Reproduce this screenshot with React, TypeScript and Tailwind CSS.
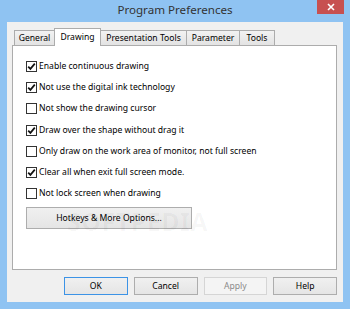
import React from "react";

const tabs = [
  { label: "General", w: "w-[41px]", sel: false },
  { label: "Drawing", w: "w-[47px]", sel: true },
  { label: "Presentation Tools", w: "w-[87px]", sel: false },
  { label: "Parameter", w: "w-[54px]", sel: false },
  { label: "Tools", w: "w-[36px]", sel: false },
];

const rows = [
  { label: "Enable continuous drawing", checked: true, mt: "mt-[15px]" },
  { label: "Not use the digital ink technology", checked: true, mt: "mt-[10px]" },
  { label: "Not show the drawing cursor", checked: false, mt: "mt-[10px]" },
  { label: "Draw over the shape without drag it", checked: true, mt: "mt-[11px]" },
  { label: "Only draw on the work area of monitor, not full screen", checked: false, mt: "mt-[10px]" },
  { label: "Clear all when exit full screen mode.", checked: true, mt: "mt-[10px]" },
  { label: "Not lock screen when drawing", checked: false, mt: "mt-[10px]" },
];

function CheckBox({ checked }: { checked: boolean }) {
  return (
    <div className="w-[11px] h-[11px] border border-[#333333] bg-white flex items-center justify-center shrink-0">
      {checked && (
        <svg width="9" height="9" viewBox="0 0 9 9">
          <path d="M1.2 4.6 L3.4 6.9 L7.8 1.6" fill="none" stroke="#111" strokeWidth="1.7" />
        </svg>
      )}
    </div>
  );
}

export default function App() {
  return (
    <div className="w-[350px] h-[309px] bg-[#8fc3f2] flex flex-col font-['Noto_Sans',sans-serif] text-black overflow-hidden">
      <div className="h-[22px] relative flex justify-center">
        <span className="text-[11.6px] leading-[20px] text-[#333333]">Program Preferences</span>
        <div className="absolute right-[6px] top-0 w-[27px] h-[14px] bg-[#c75050] flex items-center justify-center">
          <svg width="8" height="8" viewBox="0 0 8 8">
            <path d="M1 1 L7 7 M7 1 L1 7" stroke="#ffffff" strokeWidth="1.6" />
          </svg>
        </div>
      </div>
      <div className="mx-[7px] h-[280px] bg-[#f0f0f0] pt-[6px] pl-[5px] pr-[6px] flex flex-col">
        <div className="flex items-end h-[17px] pl-[2px]">
          {tabs.map((t, i) =>
            t.sel ? (
              <div
                key={t.label}
                className={`${t.w} h-[18px] -mb-px relative z-10 bg-white border border-b-0 border-[#acacac] -ml-px flex justify-center text-[8.6px] leading-[14px] pt-[1px]`}
              >
                {t.label}
              </div>
            ) : (
              <div
                key={t.label}
                className={`${t.w} h-[15px] bg-gradient-to-b from-[#f2f2f2] to-[#e3e3e3] border border-b-0 border-[#acacac] ${i === 0 ? "" : "-ml-px"} flex justify-center text-[8.6px] leading-[14px]`}
              >
                {t.label}
              </div>
            )
          )}
        </div>
        <div className="h-[225px] border border-[#acacac] bg-white relative flex flex-col pl-[13px]">
          {rows.map((r) => (
            <div key={r.label} className={`${r.mt} h-[11px] flex items-center`}>
              <CheckBox checked={r.checked} />
              <span className="ml-[2px] text-[8.6px] leading-[11px] whitespace-nowrap">{r.label}</span>
            </div>
          ))}
          <div className="mt-[8px] w-[166px] h-[22px] border border-[#adadad] bg-gradient-to-b from-[#f0f0f0] to-[#e5e5e5] flex items-center justify-center text-[8.6px]">
            Hotkeys &amp; More Options...
          </div>
          <div aria-hidden="true" className="absolute left-[54px] top-[163px] text-[25px] font-bold tracking-[0.5px] text-[rgba(0,0,0,0.035)] leading-none pointer-events-none select-none whitespace-nowrap">
            SOFTPEDIA
          </div>
        </div>
        <div className="mt-[7px] flex pl-[52px] gap-[6px]">
          <div className="w-[64px] h-[18px] border border-[#3c93e6] bg-gradient-to-b from-[#f0f0f0] to-[#e5e5e5] flex items-center justify-center text-[8.6px]">
            OK
          </div>
          <div className="w-[64px] h-[18px] border border-[#adadad] bg-gradient-to-b from-[#f0f0f0] to-[#e5e5e5] flex items-center justify-center text-[8.6px]">
            Cancel
          </div>
          <div className="w-[64px] h-[18px] border border-[#d5d5d5] bg-[#f4f4f4] flex items-center justify-center text-[8.6px] text-[#8a8a8a]">
            Apply
          </div>
          <div className="w-[64px] h-[18px] border border-[#adadad] bg-gradient-to-b from-[#f0f0f0] to-[#e5e5e5] flex items-center justify-center text-[8.6px]">
            Help
          </div>
        </div>
      </div>
    </div>
  );
}
